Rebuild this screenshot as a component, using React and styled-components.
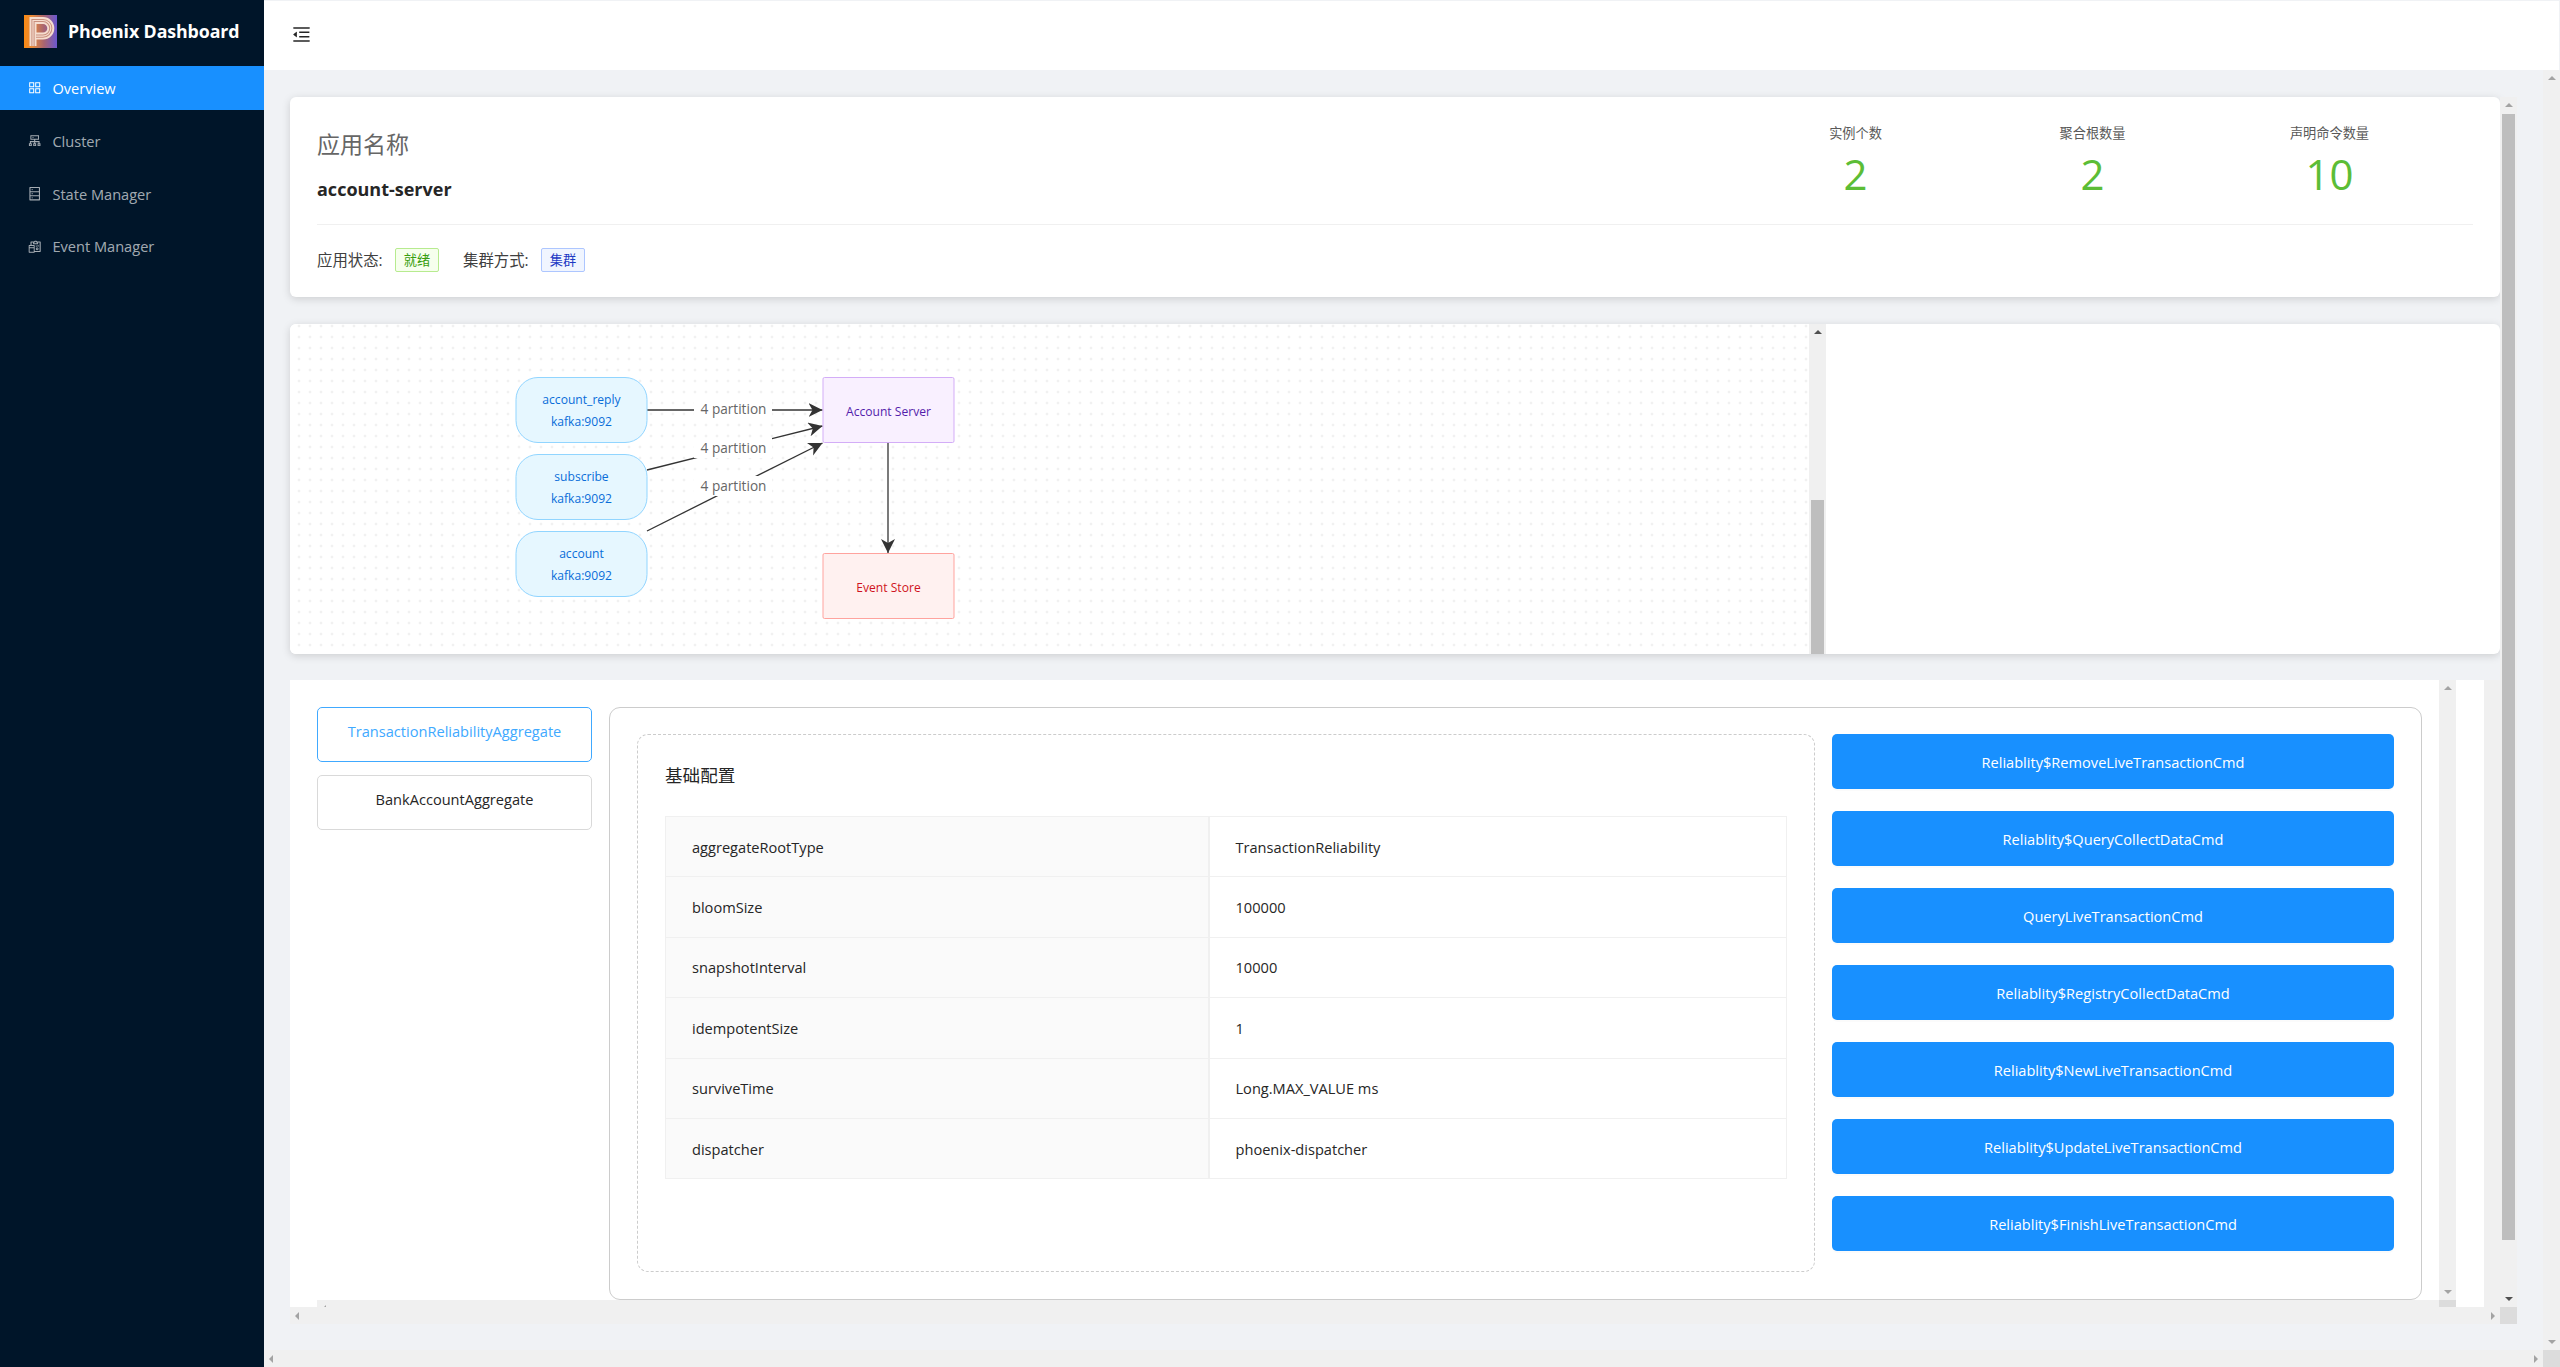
import React from 'react';
import styled, { createGlobalStyle } from 'styled-components';
import { AiOutlineAppstore, AiOutlineCluster, AiOutlineDatabase, AiOutlineReconciliation, AiOutlineMenuFold } from 'react-icons/ai';

const LATIN = `"Open Sans", "Noto Sans CJK SC", sans-serif`;

const Global = createGlobalStyle`
  html, body { margin: 0; padding: 0; height: 100%; overflow: hidden; }
  body { background: #f0f2f5; font-family: ${LATIN}; font-size: 15.4px; color: #262626; }
  * { box-sizing: border-box; }
`;

const Layout = styled.div`
  display: flex;
  width: 100vw;
  height: 100vh;
`;

//Sidebar
const Sidebar = styled.aside`
  width: 264px;
  flex: none;
  background: #001529;
`;
const Brand = styled.div`
  height: 66px;
  display: flex;
  align-items: center;
  gap: 11px;
  padding: 0 0 4px 24px;
  color: #fff;
  font-weight: 700;
  font-size: 17.8px;
  letter-spacing: -0.1px;
`;
const Nav = styled.nav`
  display: flex;
  flex-direction: column;
  gap: 8.8px;
`;
const NavItem = styled.div`
  height: 44px;
  display: flex;
  align-items: center;
  gap: 10px;
  padding-left: 27px;
  font-size: 14.6px;
  color: ${p => (p.$active ? '#fff' : 'rgba(255,255,255,0.65)')};
  background: ${p => (p.$active ? '#1890ff' : 'transparent')};
  svg { font-size: 15.4px; flex: none; }
`;

//Main column
const Main = styled.div`
  flex: 1;
  min-width: 0;
  display: flex;
  flex-direction: column;
`;
const Header = styled.header`
  height: 69px;
  flex: none;
  margin: 1px 1px 0 0;
  background: #fff;
  display: flex;
  align-items: center;
  padding: 0 0 2px 27px;
  svg { font-size: 21px; color: #262626; }
`;
const Body = styled.div`
  flex: 1;
  min-height: 0;
  display: flex;
`;
const Content = styled.div`
  flex: 1;
  min-width: 0;
  padding: 27px 26px 26px;
`;

//Scrollbars
const VTrack = styled.div`
  width: 17px;
  flex: none;
  background: #f0f0f0;
  display: flex;
  flex-direction: column;
  align-items: center;
  justify-content: space-between;
  padding: 6px 0;
  position: relative;
`;
const HTrack = styled.div`
  height: 17px;
  flex: 1;
  min-width: 0;
  background: #f0f0f0;
  display: flex;
  align-items: center;
  justify-content: space-between;
  padding: 0 5px;
`;
const Corner = styled.div`
  width: 17px;
  height: 17px;
  flex: none;
  background: #dcdcdc;
`;
const HBar = styled.div`
  display: flex;
  flex: none;
`;
const Arrow = styled.i`
  width: 0;
  height: 0;
  display: block;
  flex: none;
  border-style: solid;
  border-color: transparent;
  ${p => p.$dir === 'up' && `border-width: 0 4px 4px; border-bottom-color: ${p.$dark ? '#505050' : '#a3a3a3'};`}
  ${p => p.$dir === 'down' && `border-width: 4px 4px 0; border-top-color: ${p.$dark ? '#505050' : '#a3a3a3'};`}
  ${p => p.$dir === 'left' && `border-width: 4px 4px 4px 0; border-right-color: #a3a3a3;`}
  ${p => p.$dir === 'right' && `border-width: 4px 0 4px 4px; border-left-color: #a3a3a3;`}
`;
const Thumb = styled.div`
  position: absolute;
  left: 2px;
  width: 13px;
  background: #bebebe;
`;

//Page scroller
const PageScroll = styled.div`
  display: flex;
  flex-direction: column;
  height: 100%;
`;
const PageRow = styled.div`
  flex: 1;
  min-height: 0;
  display: flex;
`;
const Column = styled.div`
  flex: 1;
  min-width: 0;
  display: flex;
  flex-direction: column;
`;

//Summary card
const Card = styled.section`
  background: #fff;
  border-radius: 6px;
  box-shadow: 0 2px 8px rgba(0, 0, 0, 0.15);
`;
const Summary = styled(Card)`
  height: 200px;
  flex: none;
  padding: 0 27px;
`;
const SummaryTop = styled.div`
  height: 128px;
  display: flex;
  justify-content: space-between;
  border-bottom: 1px solid #f0f0f0;
`;
const AppName = styled.div`
  padding-top: 30px;
`;
const AppLabel = styled.div`
  font-size: 23px;
  line-height: 34px;
  color: #666;
`;
const AppValue = styled.div`
  margin-top: 16px;
  font-size: 18px;
  line-height: 24px;
  font-weight: 700;
  color: #262626;
`;
const Stats = styled.div`
  display: flex;
  margin-right: 25px;
  padding-top: 26px;
`;
const Stat = styled.div`
  width: 237px;
  text-align: center;
`;
const StatLabel = styled.div`
  font-size: 13.2px;
  line-height: 20px;
  color: #595959;
`;
const StatValue = styled.div`
  margin-top: 5px;
  font-size: 42px;
  line-height: 52px;
  color: #5cbd36;
`;
const SummaryBottom = styled.div`
  height: 71px;
  display: flex;
  align-items: center;
  padding-bottom: 2px;
  font-size: 15.4px;
  color: #404040;
`;
const MetaLabel = styled.span`
  width: 78px;
  flex: none;
`;
const Tag = styled.span`
  width: 44px;
  height: 24px;
  margin-right: 24px;
  flex: none;
  display: flex;
  align-items: center;
  justify-content: center;
  border-radius: 2px;
  font-size: 13.2px;
  background: ${p => p.$bg};
  border: 1px solid ${p => p.$line};
  color: ${p => p.$color};
`;

//Topology card
const Graph = styled(Card)`
  height: 330px;
  flex: none;
  margin-top: 27px;
  display: flex;
  overflow: hidden;
`;
const Canvas = styled.div`
  width: 1519px;
  flex: none;
  background-color: #fff;
  background-image: radial-gradient(circle, #dcdcdc 0.8px, transparent 1.1px);
  background-size: 11px 11px;
  background-position: -7.5px -3.5px;
  svg { display: block; }
`;

//Aggregate card
const LowerRow = styled.div`
  flex: 1;
  min-height: 0;
  margin-top: 26px;
  display: flex;
`;
const Lower = styled.section`
  width: 2194px;
  flex: none;
  background: #fff;
  display: flex;
  flex-direction: column;
`;
const LowerStrip = styled.div`
  flex: 1;
  background: #f0f0f0;
`;
const LowerBody = styled.div`
  flex: 1;
  min-height: 0;
  display: flex;
`;
const Scroller = styled.div`
  width: 2149px;
  flex: none;
  display: flex;
  gap: 17px;
  padding: 27px 17px 0 27px;
`;
const CutBar = styled.div`
  height: 7px;
  flex: none;
  display: flex;
  overflow: hidden;
`;
const CutPad = styled.div`
  width: ${p => p.$w}px;
  flex: none;
`;
const Tabs = styled.div`
  width: 275px;
  flex: none;
  display: flex;
  flex-direction: column;
  gap: 13.5px;
`;
const AggTab = styled.div`
  height: 54.5px;
  display: flex;
  justify-content: center;
  padding-top: 11px;
  border-radius: 5px;
  line-height: 24px;
  font-size: 14.6px;
  color: ${p => (p.$active ? '#40a9ff' : '#262626')};
  border: 1px solid ${p => (p.$active ? '#40a9ff' : '#d9d9d9')};
`;
const Panel = styled.div`
  width: 1813px;
  height: 593px;
  flex: none;
  border: 1px solid #ccc;
  border-radius: 11px;
  display: flex;
  gap: 17px;
  padding: 26px 27px 0;
`;
const Config = styled.div`
  width: 1178px;
  height: 538px;
  flex: none;
  border: 1px dashed #ccc;
  border-radius: 11px;
  padding: 26px 27px 0;
`;
const ConfigTitle = styled.h4`
  margin: 0 0 26px;
  font-size: 17.6px;
  line-height: 29px;
  font-weight: 400;
  color: #262626;
`;
const Table = styled.table`
  width: 100%;
  table-layout: fixed;
  border-collapse: collapse;
  font-size: 14.6px;
  color: #262626;
`;
const Row = styled.tr`
  height: 60.4px;
`;
const Key = styled.th`
  width: 543px;
  padding: 0 0 0 26px;
  text-align: left;
  font-weight: 400;
  background: #fafafa;
  border: 1px solid #f0f0f0;
  border-right-width: 2px;
`;
const Val = styled.td`
  padding: 0 0 0 26px;
  border: 1px solid #f0f0f0;
`;
const Commands = styled.div`
  width: 562px;
  flex: none;
  display: flex;
  flex-direction: column;
  gap: 22px;
`;
const CmdButton = styled.div`
  height: 55px;
  flex: none;
  display: flex;
  align-items: center;
  justify-content: center;
  border-radius: 5px;
  background: #1890ff;
  color: #fff;
  font-size: 14.6px;
  box-shadow: 0 2px 0 rgba(0, 0, 0, 0.015);
`;

const Logo = () => (
  <svg width="33" height="33" viewBox="0 0 33 33">
    <defs>
      <linearGradient id="logoBg" x1="0" y1="0" x2="1" y2="0">
        <stop offset="0" stopColor="#fb8a12" />
        <stop offset="0.25" stopColor="#e88a3a" />
        <stop offset="0.6" stopColor="#a9656f" />
        <stop offset="1" stopColor="#6a57d0" />
      </linearGradient>
    </defs>
    <rect width="33" height="33" fill="url(#logoBg)" />
    <path d="M9 31V5.5h10a7.8 7.8 0 0 1 0 15.6H12" fill="none" stroke="#f5ddcf" strokeWidth="7" />
    <path d="M9 31V5.5h10a7.8 7.8 0 0 1 0 15.6H12" fill="none" stroke="#c98f7d" strokeWidth="3.2" />
    <path d="M9 31V5.5h10a7.8 7.8 0 0 1 0 15.6H12" fill="none" stroke="#f5ddcf" strokeWidth="1.2" />
  </svg>
);

const navItems = [
  { label: 'Overview', icon: <AiOutlineAppstore />, active: true },
  { label: 'Cluster', icon: <AiOutlineCluster /> },
  { label: 'State Manager', icon: <AiOutlineDatabase /> },
  { label: 'Event Manager', icon: <AiOutlineReconciliation /> },
];

const stats = [
  { label: '实例个数', value: 2 },
  { label: '聚合根数量', value: 2 },
  { label: '声明命令数量', value: 10 },
];

const config = [
  ['aggregateRootType', 'TransactionReliability'],
  ['bloomSize', '100000'],
  ['snapshotInterval', '10000'],
  ['idempotentSize', '1'],
  ['surviveTime', 'Long.MAX_VALUE ms'],
  ['dispatcher', 'phoenix-dispatcher'],
];

const commands = [
  'Reliablity$RemoveLiveTransactionCmd',
  'Reliablity$QueryCollectDataCmd',
  'QueryLiveTransactionCmd',
  'Reliablity$RegistryCollectDataCmd',
  'Reliablity$NewLiveTransactionCmd',
  'Reliablity$UpdateLiveTransactionCmd',
  'Reliablity$FinishLiveTransactionCmd',
];

const topics = [
  { name: 'account_reply', y: 377.5 },
  { name: 'subscribe', y: 454.5 },
  { name: 'account', y: 531.5 },
];

const edges = [
  { y1: 410, y2: 410, label: 410 },
  { y1: 470, y2: 426, label: 449 },
  { y1: 531, y2: 443, label: 487 },
];

const NODE_FONT = { fontFamily: LATIN, fontSize: 12.1, textAnchor: 'middle', dominantBaseline: 'middle' };

// coordinates are page pixels, the viewBox starts where the canvas starts
function Topology() {
  return (
    <svg width="1519" height="330" viewBox="290 324 1519 330">
      <defs>
        <marker id="head" markerUnits="userSpaceOnUse" markerWidth="16" markerHeight="16" refX="14" refY="7" orient="auto">
          <path d="M0 0L14 7L0 14L4 7Z" fill="#333" />
        </marker>
      </defs>
      {edges.map(e => (
        <g key={e.label}>
          <line x1="647" y1={e.y1} x2="822.5" y2={e.y2} stroke="#333" strokeWidth="1.3" markerEnd="url(#head)" />
          <rect x="694" y={e.label - 11} width="78" height="20" fill="#fff" />
          <text x="733.5" y={e.label} fontFamily={LATIN} fontSize="13.6" fill="#666" textAnchor="middle" dominantBaseline="middle">
            4 partition
          </text>
        </g>
      ))}
      <line x1="888" y1="442" x2="888" y2="553" stroke="#333" strokeWidth="1.3" markerEnd="url(#head)" />
      {topics.map(t => (
        <g key={t.name}>
          <rect x="516" y={t.y} width="131" height="65" rx="22" fill="#e6f7ff" stroke="#91d5ff" />
          <text {...NODE_FONT} x="581.5" y={t.y + 23.5} fill="#096dd9">{t.name}</text>
          <text {...NODE_FONT} x="581.5" y={t.y + 45.5} fill="#096dd9">kafka:9092</text>
        </g>
      ))}
      <rect x="823" y="377.5" width="131" height="65" rx="1.5" fill="#f9f0ff" stroke="#d3adf7" />
      <text {...NODE_FONT} x="888.5" y="412.5" fill="#531dab">Account Server</text>
      <rect x="823" y="553.5" width="131" height="65" rx="1.5" fill="#fff1f0" stroke="#ffa39e" />
      <text {...NODE_FONT} x="888.5" y="588.5" fill="#cf1322">Event Store</text>
    </svg>
  );
}

function App() {
  return (
    <Layout>
      <Global />
      <Sidebar>
        <Brand>
          <Logo />
          Phoenix Dashboard
        </Brand>
        <Nav>
          {navItems.map(item => (
            <NavItem key={item.label} $active={item.active}>
              {item.icon}
              {item.label}
            </NavItem>
          ))}
        </Nav>
      </Sidebar>
      <Main>
        <Header>
          <AiOutlineMenuFold />
        </Header>
        <Body>
          <Content>
            <PageScroll>
              <PageRow>
                <Column>
                  <Summary>
                    <SummaryTop>
                      <AppName>
                        <AppLabel>应用名称</AppLabel>
                        <AppValue>account-server</AppValue>
                      </AppName>
                      <Stats>
                        {stats.map(s => (
                          <Stat key={s.label}>
                            <StatLabel>{s.label}</StatLabel>
                            <StatValue>{s.value}</StatValue>
                          </Stat>
                        ))}
                      </Stats>
                    </SummaryTop>
                    <SummaryBottom>
                      <MetaLabel>应用状态:</MetaLabel>
                      <Tag $bg="#f6ffed" $line="#b7eb8f" $color="#389e0d">就绪</Tag>
                      <MetaLabel>集群方式:</MetaLabel>
                      <Tag $bg="#f0f5ff" $line="#adc6ff" $color="#1d39c4">集群</Tag>
                    </SummaryBottom>
                  </Summary>
                  <Graph>
                    <Canvas>
                      <Topology />
                    </Canvas>
                    <VTrack>
                      <Arrow $dir="up" $dark />
                      <Thumb style={{ top: 176, bottom: 0 }} />
                    </VTrack>
                  </Graph>
                  <LowerRow>
                    <Lower>
                      <LowerBody>
                        <Scroller>
                          <Tabs>
                            <AggTab $active>TransactionReliabilityAggregate</AggTab>
                            <AggTab>BankAccountAggregate</AggTab>
                          </Tabs>
                          <Panel>
                            <Config>
                              <ConfigTitle>基础配置</ConfigTitle>
                              <Table>
                                <tbody>
                                  {config.map(([k, v]) => (
                                    <Row key={k}>
                                      <Key>{k}</Key>
                                      <Val>{v}</Val>
                                    </Row>
                                  ))}
                                </tbody>
                              </Table>
                            </Config>
                            <Commands>
                              {commands.map(c => (
                                <CmdButton key={c}>{c}</CmdButton>
                              ))}
                            </Commands>
                          </Panel>
                        </Scroller>
                        <VTrack>
                          <Arrow $dir="up" />
                          <Arrow $dir="down" />
                        </VTrack>
                      </LowerBody>
                      <CutBar>
                        <CutPad $w={27} />
                        <HTrack>
                          <Arrow $dir="left" />
                        </HTrack>
                        <Corner />
                        <CutPad $w={28} />
                      </CutBar>
                    </Lower>
                    <LowerStrip />
                  </LowerRow>
                </Column>
                <VTrack>
                  <Arrow $dir="up" />
                  <Thumb style={{ top: 17, bottom: 67 }} />
                  <Arrow $dir="down" $dark />
                </VTrack>
              </PageRow>
              <HBar>
                <HTrack>
                  <Arrow $dir="left" />
                  <Arrow $dir="right" />
                </HTrack>
                <Corner />
              </HBar>
            </PageScroll>
          </Content>
          <VTrack>
            <Arrow $dir="up" />
            <Arrow $dir="down" />
          </VTrack>
        </Body>
        <HBar>
          <HTrack>
            <Arrow $dir="left" />
            <Arrow $dir="right" />
          </HTrack>
          <Corner />
        </HBar>
      </Main>
    </Layout>
  );
}

export default App;
